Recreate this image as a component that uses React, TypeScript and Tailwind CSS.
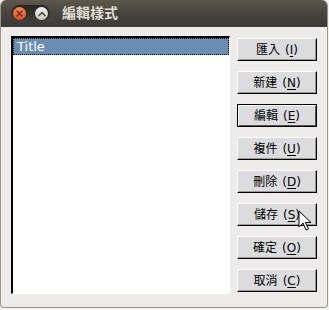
import React from 'react';

const buttons = [
  { label: '匯入', key: 'I' },
  { label: '新建', key: 'N' },
  { label: '編輯', key: 'E', focused: true },
  { label: '複件', key: 'U' },
  { label: '刪除', key: 'D' },
  { label: '儲存', key: 'S' },
  { label: '確定', key: 'O' },
  { label: '取消', key: 'C' },
];

function DialogButton({ label, hotkey, focused }: { label: string; hotkey: string; focused?: boolean }) {
  return (
    <button
      className={`h-[23px] w-[80px] bg-[#dcdcdf] text-[12px] leading-none text-black flex items-center justify-center ${
        focused
          ? 'border border-black shadow-[inset_1px_1px_0_#ffffff,inset_-1px_-1px_0_#555555]'
          : 'border-t border-l border-t-white border-l-white border-b border-r border-b-black border-r-black shadow-[inset_-1px_-1px_0_#9a9a9a]'
      }`}
    >
      <span>{label}</span>
      <span className="ml-[5px]">
        (<span className="underline underline-offset-2">{hotkey}</span>)
      </span>
    </button>
  );
}

export default function App() {
  return (
    <div className="w-[329px] h-[310px] bg-[#f2f2f2]" style={{ fontFamily: '"DejaVu Sans", "Noto Sans CJK TC", sans-serif' }}>
      <div className="relative w-[328px] h-[308px] flex flex-col rounded-t-[6px] rounded-b-[4px] overflow-hidden border-x border-b border-[#a2937a] bg-[#edeceb]">
        {/* Title bar */}
        <div className="h-[27px] shrink-0 flex items-center bg-gradient-to-b from-[#5e584c] via-[#46443e] to-[#3c3b37] -mx-px">
          <div className="ml-[11px] h-[17px] w-[39px] rounded-full bg-gradient-to-b from-[#262522] to-[#3f3e3a] flex items-center justify-between px-[2px]">
            <div className="w-[13px] h-[13px] rounded-full bg-gradient-to-b from-[#f58a5c] to-[#df4a17] flex items-center justify-center">
              <svg width="7" height="7" viewBox="0 0 7 7">
                <path d="M1 1L6 6M6 1L1 6" stroke="#6b2a10" strokeWidth="1.4" strokeLinecap="round" />
              </svg>
            </div>
            <div className="w-[13px] h-[13px] rounded-full bg-gradient-to-b from-[#f6f5f2] to-[#c8c5bd] flex items-center justify-center">
              <svg width="8" height="6" viewBox="0 0 8 6">
                <path d="M1 4.5L4 1.5L7 4.5" stroke="#3c3b37" strokeWidth="1.4" fill="none" strokeLinecap="round" />
              </svg>
            </div>
          </div>
          <span className="ml-[12px] text-[14px] font-bold text-[#dfdbd2]">編輯樣式</span>
        </div>

        {/* Content */}
        <div className="flex flex-1 pl-[10px] pr-[9px] pt-[9px]">
          <div className="w-[219px] h-[258px] bg-white border-t-2 border-l-2 border-t-black border-l-black border-b border-r border-b-white border-r-white">
            <div className="h-[17px] bg-[#6a8db4] border border-dotted border-black flex items-center pl-[3px] text-[13px] text-white">
              Title
            </div>
          </div>
          <div className="ml-[7px] mt-[2px] flex flex-col gap-[10px]">
            {buttons.map((b) => (
              <DialogButton key={b.key} label={b.label} hotkey={b.key} focused={b.focused} />
            ))}
          </div>
        </div>

        {/* Mouse pointer */}
        <svg className="absolute left-[297px] top-[210px]" width="14" height="22" viewBox="0 0 14 22">
          <path d="M1 1L1 17L5 13L8 20L10.5 19L7.5 12.5L13 12.5Z" fill="#ffffff" stroke="#000000" strokeWidth="1" strokeLinejoin="round" />
        </svg>
      </div>
    </div>
  );
}
